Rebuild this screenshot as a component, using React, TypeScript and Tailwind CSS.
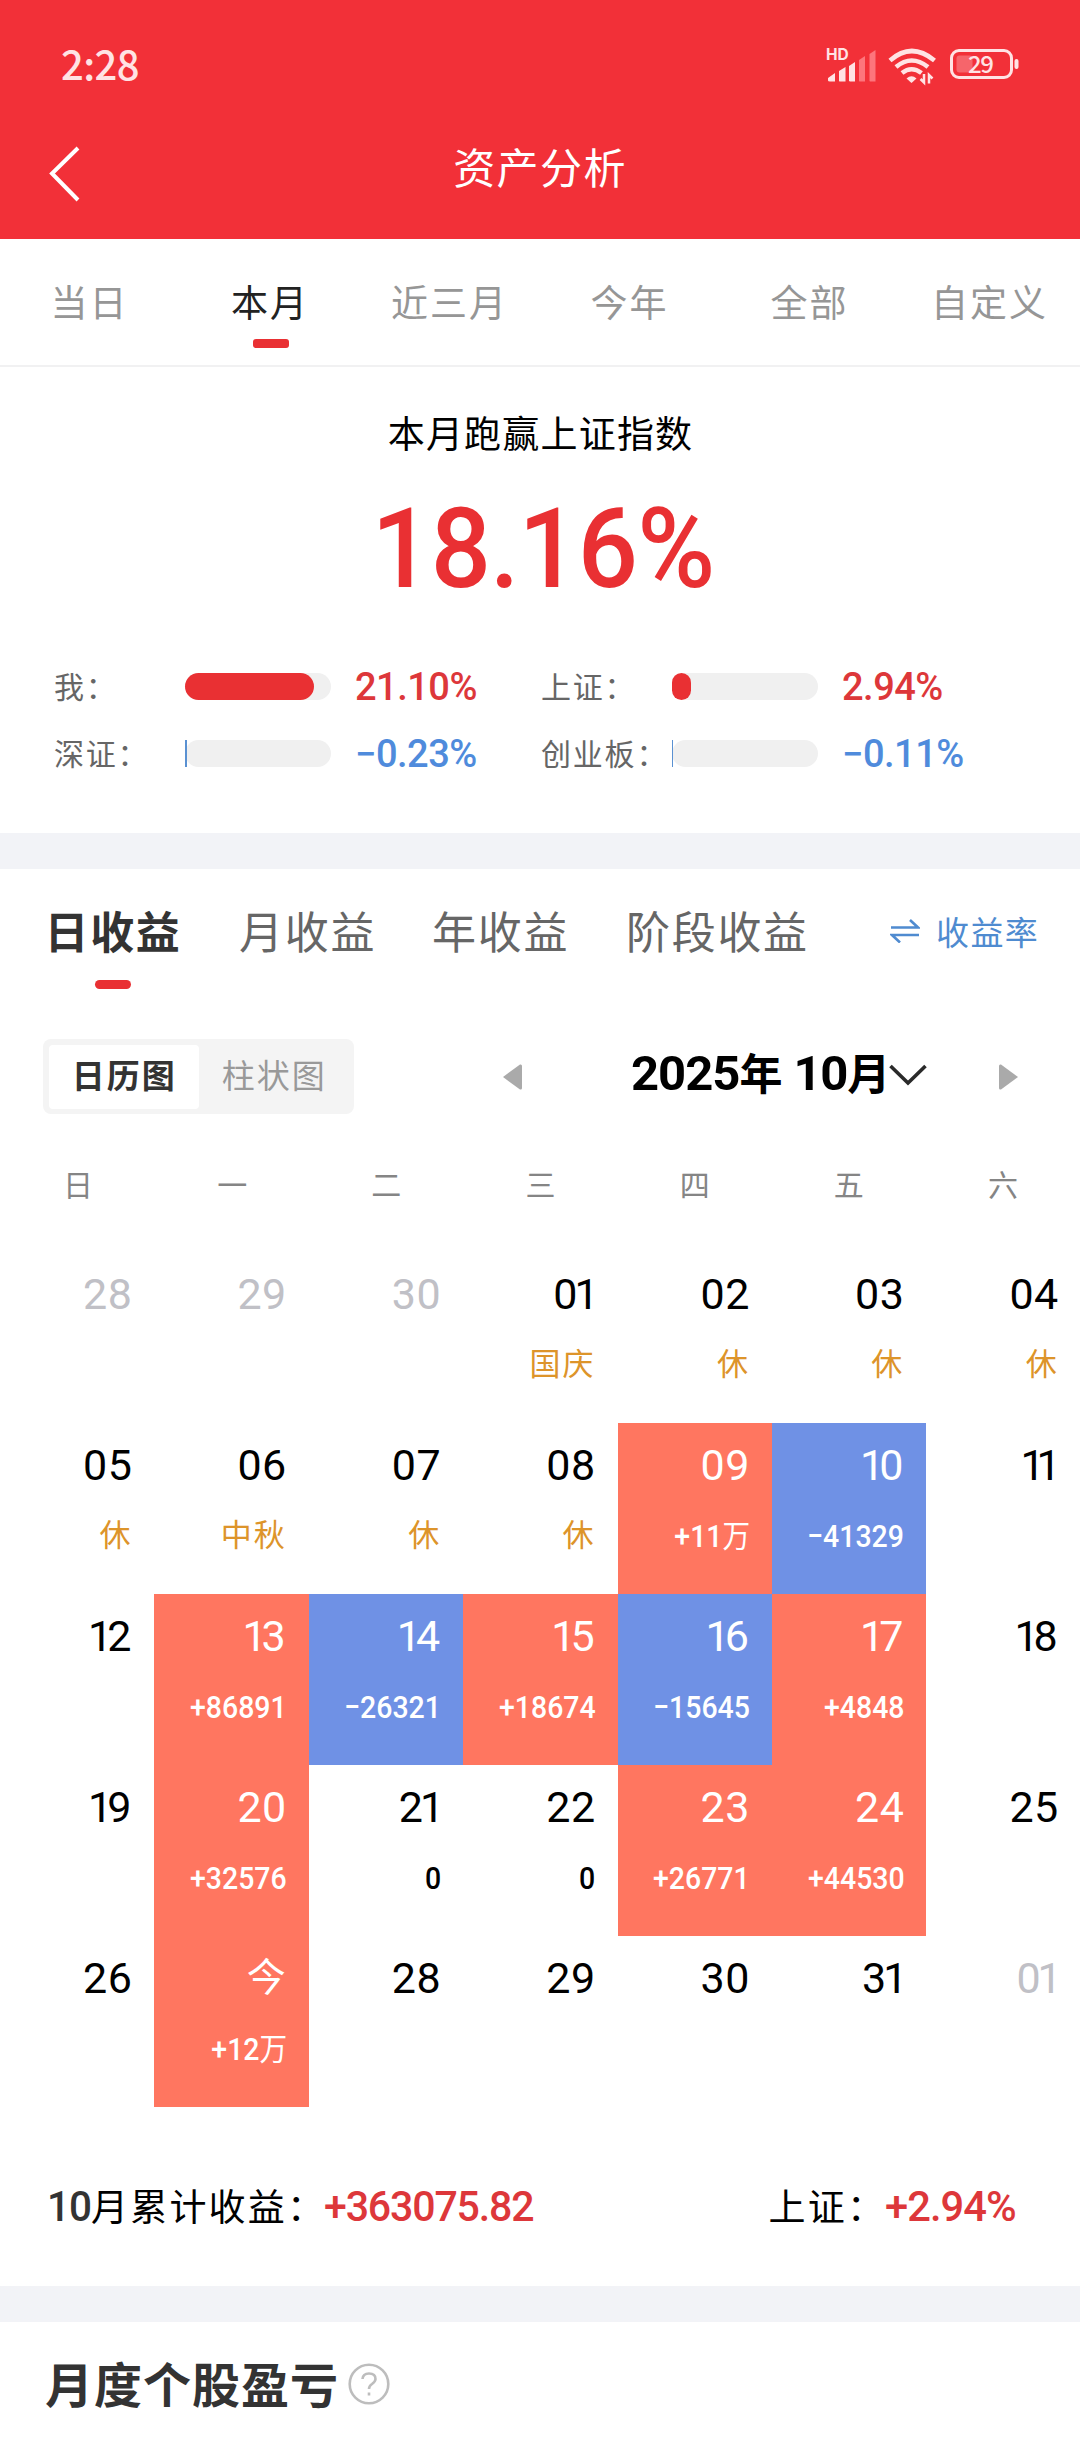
import React from "react";

const CJK = "font-['Noto_Sans_CJK_SC',sans-serif]";
const DIN = "font-['Roboto','Noto_Sans_CJK_SC',sans-serif]";

function StatusBar() {
  return (
    <div className="flex h-[126px] items-center justify-between pl-[61px] pr-[58px]">
      <span className="text-[40px] font-medium leading-[40px] tracking-[-0.6px] text-[#ffe3e4]">2:28</span>
      <svg className="h-[52px] w-[200px] overflow-visible" viewBox="-4 -6 200 52" fill="none">
        <text x="0" y="17" fill="#ffe3e4" fontFamily="Inter" fontWeight="700" fontSize="15.500">HD</text>
        <path d="M2 38v-3l7-5v8.500h-5q-2 0-2-1zM13 38V28l6.500-4v14.500h-6zM23 38V23l6-4v19.500h-5z" fill="#ffe3e4" />
        <path d="M33 38V17l6-4v25.500h-5.500zM43.500 38V11l6-4v31.500h-5.500z" fill="#fd757c" />
        <g stroke="#ffe3e4" strokeWidth="4.600">
          <path d="M64 17.500q21.500-19 44.500 0" />
          <path d="M70 24q15.500-13 32 0" />
          <path d="M76 30q9.500-7.500 19.500 0" />
        </g>
        <path d="M80.500 35.500q5-4.500 10 0l-5 4.500z" fill="#ffe3e4" />
        <path d="M98 31v8.500l-3.500-3.500M103 40.500V32l3.500 3.500" stroke="#ffe3e4" strokeWidth="2.500" />
        <rect x="125.500" y="7.500" width="60" height="27" rx="7.500" stroke="#ffe3e4" strokeWidth="3" />
        <rect x="130.500" y="12.500" width="16" height="17" rx="3" fill="#f6656b" />
        <rect x="188.500" y="16" width="4" height="10" rx="2" fill="#ffe3e4" />
        <text x="142" y="30" fill="#ffe3e4" fontFamily="Noto Sans CJK SC" fontWeight="500" fontSize="24" textLength="26">29</text>
      </svg>
    </div>
  );
}

function Header() {
  return (
    <header className="h-[239px] bg-[#f23038]">
      <StatusBar />
      <div className="grid h-[92px] grid-cols-[120px_1fr_120px] items-center">
        <svg className="mt-1 ml-[48px] h-[58px] w-[34px]" viewBox="0 0 34 58" fill="none">
          <path d="M30 3 4 28.500 30 55" stroke="#fff" strokeWidth="4" />
        </svg>
        <h1 className="pb-[12px] text-center text-[42px] leading-[60px] tracking-[1.4px] text-white">资产分析</h1>
      </div>
    </header>
  );
}

const ranges = ["当日", "本月", "近三月", "今年", "全部", "自定义"];

function RangeTabs() {
  return (
    <nav className="grid h-[128px] grid-cols-6 border-b-2 border-[#f1f1f2]">
      {ranges.map((r) => (
        <div key={r} className="flex flex-col items-center pt-[34px]">
          <span className={r === "本月" ? "whitespace-nowrap text-[37px] leading-[56px] tracking-[2px] text-[#222]" : "-ml-px whitespace-nowrap text-[37px] leading-[56px] tracking-[2px] text-[#969696]"}>{r}</span>
          {r === "本月" && <i className="mt-[10px] ml-[2px] h-[9px] w-9 rounded-[3px] bg-[#e93033]" />}
        </div>
      ))}
    </nav>
  );
}

const rates = [
  { name: "我：", value: "21.10%", bar: 129, up: true },
  { name: "上证：", value: "2.94%", bar: 19, up: true },
  { name: "深证：", value: "−0.23%", bar: 2, up: false },
  { name: "创业板：", value: "−0.11%", bar: 1, up: false },
];

function Summary() {
  return (
    <section className="h-[466px] pt-[35px]">
      <h2 className="pl-px text-center text-[37px] leading-[60px] tracking-[1.2px] text-black">本月跑赢上证指数</h2>
      <div className={`mt-[22px] scale-x-[0.955] pl-[6px] text-center text-[111px] font-medium leading-[130px] tracking-[-1px] text-[#e93033] ${DIN}`}>18.16%</div>
      <div className="mt-[39px] grid grid-cols-[487px_487px] pl-[54px]">
        {rates.map((r) => (
          <div key={r.name} className="flex h-[67px] items-center">
            <span className="w-[131px] whitespace-nowrap pb-1 text-[30px] leading-[44px] tracking-[1.8px] text-[#666]">{r.name}</span>
            <div className="h-[27px] w-[146px] rounded-full bg-[#f0f0f0]">
              <div className={r.up ? "h-full rounded-full bg-[#e93033]" : "h-full bg-[#5a91d2]"} style={{ width: r.bar }} />
            </div>
            <span className={`ml-[24px] text-[38px] font-medium leading-[44px] tracking-[-0.5px] ${r.up ? "text-[#dd373a]" : "text-[#4f8bdc]"} ${DIN}`}>{r.value}</span>
          </div>
        ))}
      </div>
    </section>
  );
}

function ProfitTabs() {
  return (
    <div className="flex h-[125px] items-start pl-[46px] pt-[29px]">
      <div className="flex gap-[56px] text-[44px] leading-[64px] tracking-[1.7px] text-[#666]">
        <div className="flex w-[137px] flex-col items-center whitespace-nowrap">
          <span className="mr-[3px] font-bold text-[#333]">日收益</span>
          <i className="mt-[18px] mr-[3px] h-[9px] w-9 rounded-full bg-[#e93033]" />
        </div>
        <span className="w-[137px] whitespace-nowrap">月收益</span>
        <span className="w-[137px] whitespace-nowrap">年收益</span>
        <span className="w-[183px] whitespace-nowrap pl-px">阶段收益</span>
      </div>
      <div className="ml-[82px] flex h-[64px] items-center gap-[16px] text-[#4f8bd0]">
        <svg className="mt-[2px] h-[24px] w-[30px]" viewBox="0 0 30 24" fill="none" stroke="currentColor" strokeWidth="2.600">
          <path d="M1 8.500h27L20 1M29 16H2l8 7.500" />
        </svg>
        <span className="whitespace-nowrap pt-px text-[33px] leading-[48px] tracking-[1.4px]">收益率</span>
      </div>
    </div>
  );
}

function MonthBar() {
  return (
    <div className="mt-[45px] flex h-[75px] items-center pl-[43px]">
      <div className="flex h-[75px] w-[311px] rounded-lg bg-[#f4f4f4] p-[6px] text-[33px] leading-[59px] tracking-[2px]">
        <span className="h-[64px] w-[150px] rounded bg-white pl-px text-center font-bold text-[#333]">日历图</span>
        <span className="w-[150px] pl-[2px] text-center text-[#999]">柱状图</span>
      </div>
      <svg className="ml-[149px] h-[26px] w-[19px]" viewBox="0 0 19 26"><path d="M0 13 17 .5q2-.5 2 1.500v22q0 2-2 1.500z" fill="#aaa" /></svg>
      <div className="ml-[109px] flex w-[368px] items-center pb-[4px]">
        <span className="flex items-baseline whitespace-nowrap pb-1 text-[43px] font-bold leading-[64px] text-black">
          <span className={`text-[49px] tracking-[-1px] ${DIN}`}>2025</span>年
          <span className={`ml-[11px] text-[49px] tracking-[-1.200px] ${DIN}`}>10</span>月
        </span>
        <svg className="-ml-px h-[22px] w-[38px]" viewBox="0 0 38 22" fill="none"><path d="M1.500 2 19 19 36.500 2" stroke="#2a2a2a" strokeWidth="3.600" /></svg>
      </div>
      <svg className="h-[26px] w-[19px]" viewBox="0 0 19 26"><path d="M19 13 2 .5Q0 0 0 2v22q0 2 2 1.500z" fill="#aaa" /></svg>
    </div>
  );
}

type Day = { d: string; note?: string; v?: string; muted?: boolean };

const days: Day[] = [
  { d: "28", muted: true }, { d: "29", muted: true }, { d: "30", muted: true },
  { d: "01", note: "国庆" }, { d: "02", note: "休" }, { d: "03", note: "休" }, { d: "04", note: "休" },
  { d: "05", note: "休" }, { d: "06", note: "中秋" }, { d: "07", note: "休" }, { d: "08", note: "休" },
  { d: "09", v: "+11万" }, { d: "10", v: "−41329" }, { d: "11" },
  { d: "12" }, { d: "13", v: "+86891" }, { d: "14", v: "−26321" }, { d: "15", v: "+18674" },
  { d: "16", v: "−15645" }, { d: "17", v: "+4848" }, { d: "18" },
  { d: "19" }, { d: "20", v: "+32576" }, { d: "21", v: "0" }, { d: "22", v: "0" },
  { d: "23", v: "+26771" }, { d: "24", v: "+44530" }, { d: "25" },
  { d: "26" }, { d: "今", v: "+12万" }, { d: "28" }, { d: "29" }, { d: "30" }, { d: "31" },
  { d: "01", muted: true },
];

// Proportional spacing for dates: the figure one takes less room than the others.
function dateSpacing(d: string) {
  if (d === "今") return "text-[39px] mr-px";
  if (d === "11") return "text-[43px] tracking-[-8px] mr-[6px]";
  if (d.startsWith("1")) return "text-[43px] tracking-[-5px] mr-[6px]";
  if (d.endsWith("1")) return "text-[43px] tracking-[-3px]";
  return "text-[43px] tracking-[0.5px]";
}

function DayCell({ day }: { day: Day }) {
  const up = day.v?.startsWith("+");
  const down = day.v?.startsWith("−");
  const tone = up ? "bg-[#ff7660] text-white" : down ? "bg-[#6f91e5] text-white" : day.muted ? "text-[#c0c0c6]" : "text-black";
  return (
    <div className={`flex h-full flex-col items-end pr-[22px] ${tone}`}>
      <span className={`mt-[12px] h-[60px] leading-[60px] ${DIN} ${dateSpacing(day.d)}`}>{day.d}</span>
      {day.note && <span className="mt-[15px] text-[31px] leading-[46px] tracking-[2px] text-[#dd942a]">{day.note}</span>}
      {day.v && (
        <span className={`mt-[18px] origin-right scale-x-[0.89] text-[32px] font-medium leading-[46px] ${DIN}`}>
          {day.v.replace("万", "")}
          {day.v.endsWith("万") && <span className="text-[31px] font-normal">万</span>}
        </span>
      )}
    </div>
  );
}

function Calendar() {
  return (
    <>
      <div className="mt-[39px] grid h-[60px] grid-cols-7 pl-px text-center text-[30px] leading-[60px] text-[#858585]">
        {["日", "一", "二", "三", "四", "五", "六"].map((w) => <span key={w}>{w}</span>)}
      </div>
      <div className="mt-[39px] grid h-[855px] grid-cols-[repeat(7,154.4px)] grid-rows-5">
        {days.map((day, i) => <DayCell key={i} day={day} />)}
      </div>
    </>
  );
}

function Totals() {
  return (
    <div className="flex h-[178px] items-center justify-between pl-[47px] pr-[64px] pt-[19px] text-[37px] leading-[60px] tracking-[2.2px] text-black">
      <div className="flex items-center whitespace-nowrap">
        <span className={`w-[44px] origin-left scale-x-[0.94] text-[43px] font-medium tracking-[-1px] text-[#333] ${DIN}`}>10</span>
        <span className="pb-[2px]">月累计收益：</span>
        <span className={`-ml-[2px] origin-left scale-x-[0.955] text-[43px] font-medium tracking-[-1.2px] text-[#dd373a] ${DIN}`}>+363075.82</span>
      </div>
      <div className="flex items-center whitespace-nowrap">
        <span className="pb-[2px]">上证：</span>
        <span className={`-ml-[5px] origin-right scale-x-[0.97] text-[43px] font-medium tracking-[-1px] text-[#dd373a] ${DIN}`}>+2.94%</span>
      </div>
    </div>
  );
}

export default function App() {
  return (
    <main className={`h-[2460px] w-[1080px] overflow-hidden bg-white ${CJK}`}>
      <Header />
      <RangeTabs />
      <Summary />
      <div className="h-9 bg-[#f2f3f7]" />
      <section className="h-[1417px]">
        <ProfitTabs />
        <MonthBar />
        <Calendar />
        <Totals />
      </section>
      <div className="h-9 bg-[#f2f3f7]" />
      <section className="flex h-[124px] items-center gap-[9px] pl-[45px]">
        <h2 className="pb-1 text-[48px] font-bold leading-[70px] tracking-[1px] text-[#333]">月度个股盈亏</h2>
        <svg className="h-[42px] w-[42px]" viewBox="0 0 42 42" fill="none" stroke="#bdbdbd" strokeWidth="2.600">
          <circle cx="21" cy="21" r="19.300" />
          <path d="M14.500 16q.5-5.500 6.500-5.500 6.500 0 6.500 5.500 0 2.500-3.500 5-3 2-3 5M21 29.500v3" />
        </svg>
      </section>
    </main>
  );
}
